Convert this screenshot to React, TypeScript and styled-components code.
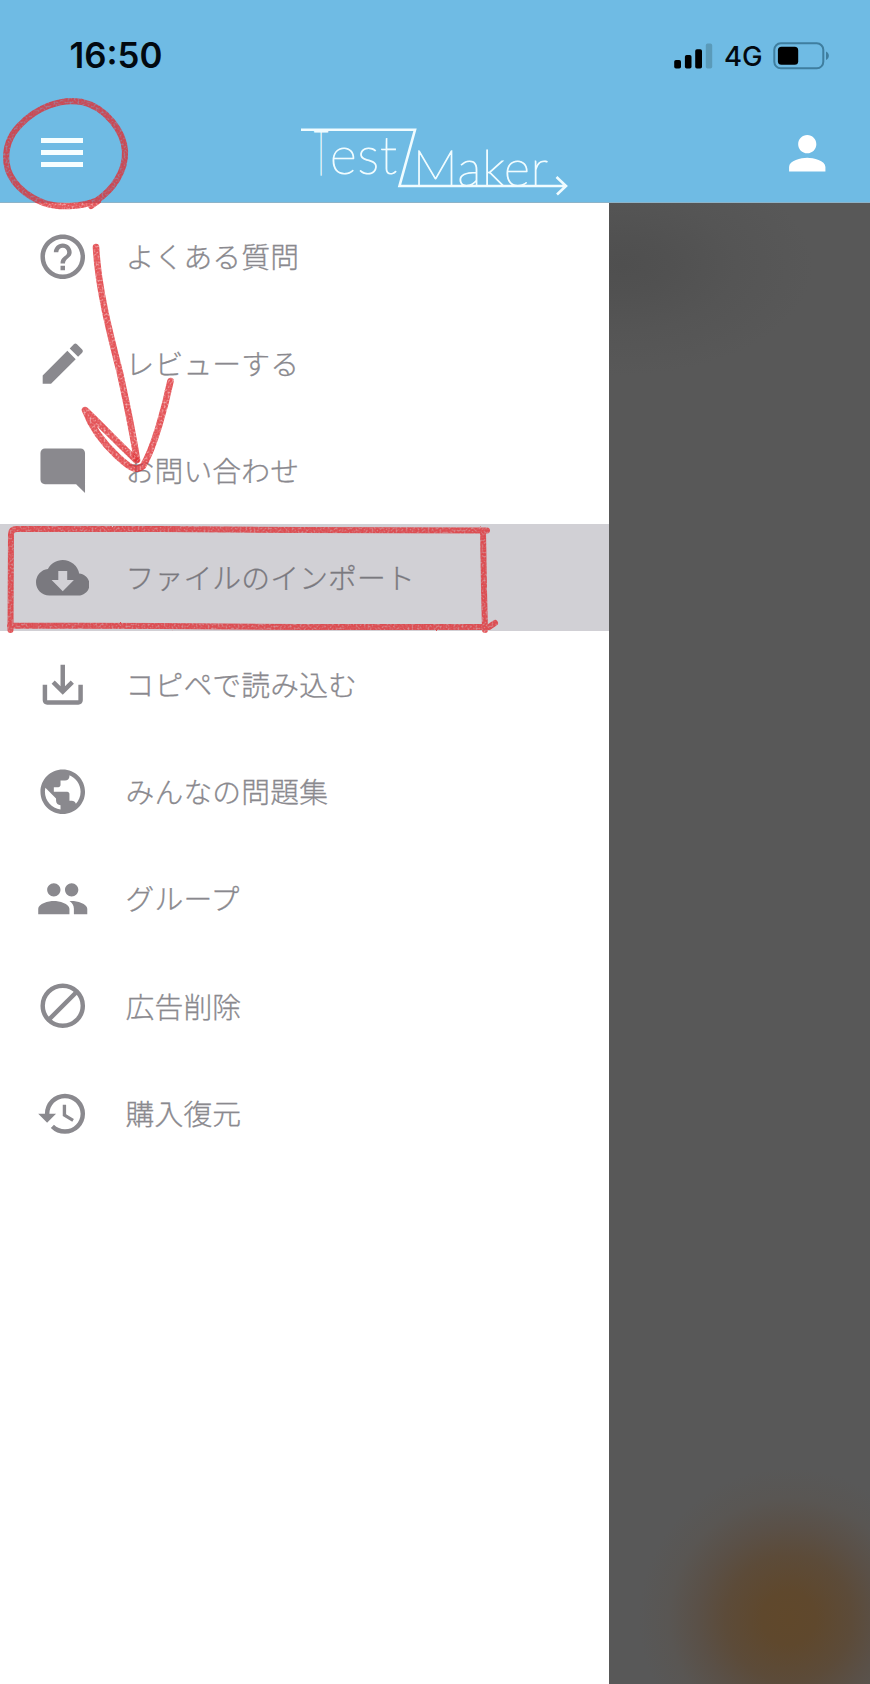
import React from 'react';
import styled, { createGlobalStyle } from 'styled-components';
import {
  MdCloudDownload,
  MdCreate,
  MdGroup,
  MdHelpOutline,
  MdHistory,
  MdModeComment,
  MdPerson,
  MdPublic,
  MdSaveAlt,
} from 'react-icons/md';

const GlobalStyle = createGlobalStyle`
  body { margin: 0; background: #fff; }
  *, *::before, *::after { box-sizing: border-box; }
`;

const Screen = styled.div`
  position: relative;
  display: flex;
  flex-direction: column;
  width: 870px;
  height: 1684px;
  overflow: hidden;
  font-family: 'Noto Sans CJK JP', sans-serif;
`;

const Header = styled.header`
  flex: none;
  height: 203px;
  background: #6fbbe4;
  border-bottom: 1px solid #8db3c8;
`;

const StatusBar = styled.div`
  display: flex;
  align-items: center;
  justify-content: space-between;
  height: 112px;
  padding: 0 41px 0 69.5px;
  font-family: Inter, sans-serif;
  color: #020910;
`;

const Clock = styled.time`
  padding-bottom: 2px;
  font-size: 34.8px;
  font-weight: 600;
  line-height: 42px;
`;

const StatusIcons = styled.div`
  display: flex;
  align-items: center;
`;

const Network = styled.span`
  width: 59px;
  padding-left: 11px;
  font-size: 27.5px;
  font-weight: 450;
  line-height: 34px;
  white-space: nowrap;
`;

const NavBar = styled.nav`
  display: grid;
  grid-template-columns: 290px 290px 290px;
  height: 90px;
`;

const MenuButton = styled.button`
  display: flex;
  flex-direction: column;
  gap: 7.3px;
  width: 42px;
  margin: 26px 0 0 41.4px;
  padding: 0;
  border: 0;
  background: none;
`;

const MenuLine = styled.span`
  height: 4.8px;
  background: #f6feff;
`;

const LogoImage = styled.svg`
  overflow: visible;
`;

const AccountButton = styled.button`
  justify-self: end;
  width: 54.5px;
  height: 54.5px;
  margin: 14px 35.6px 0 0;
  padding: 0;
  border: 0;
  background: none;
  color: #fff;
  font-size: 54.5px;
  line-height: 0;
`;

const Body = styled.main`
  display: flex;
  flex: 1;
`;

const Drawer = styled.ul`
  width: 609px;
  margin: 0;
  padding: 0;
  list-style: none;
  background: #fff;
`;

const Item = styled.li<{ $active?: boolean }>`
  display: flex;
  align-items: center;
  height: 107.1px;
  padding-left: 35.7px;
  background: ${(p) => (p.$active ? '#d1d0d5' : 'transparent')};
  color: ${(p) => (p.$active ? '#7a797f' : '#8a898e')};
`;

const ItemIcon = styled.span`
  display: flex;
  width: 53.5px;
  font-size: 53.5px;
`;

const ItemLabel = styled.span`
  margin-left: 36.3px;
  padding-bottom: 1.4px;
  font-size: 28.8px;
  font-weight: 300;
  line-height: 42px;
  letter-spacing: 0.15px;
  white-space: nowrap;
  -webkit-text-stroke: 0.3px currentColor;
`;

const Backdrop = styled.div`
  flex: 1;
  background:
    radial-gradient(ellipse 190px 110px at 14px 62px, #4f4f4f 0%, #515151 25%, #555 60%, rgba(88, 88, 88, 0) 100%),
    radial-gradient(circle 150px at 180px 1415px, #60482b 0%, #5f482d 18%, #5c4b39 42%, #5a5047 60%, #595653 80%, rgba(88, 88, 88, 0) 100%),
    #585858;
`;

const Markup = styled.svg`
  position: absolute;
  top: 0;
  left: 0;
  pointer-events: none;
`;

const Signal = () => (
  <svg width="39" height="26" viewBox="0 0 39 26">
    <rect x="0.2" y="17" width="6.8" height="8.6" rx="1.8" />
    <rect x="10.9" y="12" width="6.6" height="13.6" rx="1.8" />
    <rect x="21.2" y="6.2" width="6.8" height="19.4" rx="1.8" />
    <rect x="31.8" y="0.6" width="6.4" height="25" rx="1.8" fill="#5a9ab9" />
  </svg>
);

const Battery = () => (
  <svg width="57" height="28" viewBox="0 0 57 28">
    <rect x="2.3" y="1.3" width="49" height="25" rx="6.5" fill="none" stroke="#3f7e9f" strokeWidth="2" />
    <rect x="5.9" y="4.8" width="20.3" height="18" rx="3.6" fill="#000" />
    <path d="M54 9.4c3.8 1.6 3.8 7 0 8.6z" fill="#3f7e9f" />
  </svg>
);

const Logo = () => (
  <LogoImage width="290" height="90" viewBox="290 112 290 90">
    <g fill="#f0fcff" stroke="#f0fcff" strokeWidth="1.1" fontFamily="Lato, sans-serif" fontWeight="200">
      <text x="314" y="174.5" fontSize="62.5" strokeWidth="1.6" textLength="14" lengthAdjust="spacingAndGlyphs">
        T
      </text>
      <text x="330" y="173.5" fontSize="51.5" textLength="67">
        est
      </text>
      <text x="413" y="186" fontSize="50" textLength="135">
        Maker
      </text>
    </g>
    <path
      d="M301 129.8H415L399.5 186H565M556.5 177L566 186L557 194.5"
      fill="none"
      stroke="#f0fcff"
      strokeWidth="2.6"
    />
  </LogoImage>
);

const NoAds = () => (
  <svg width="1em" height="1em" viewBox="0 0 24 24" fill="none" stroke="currentColor" strokeWidth="2">
    <circle cx="12" cy="12" r="9" />
    <path d="M5.6 18.4L18.4 5.6" />
  </svg>
);

const items = [
  { label: 'よくある質問', icon: <MdHelpOutline /> },
  { label: 'レビューする', icon: <MdCreate /> },
  { label: 'お問い合わせ', icon: <MdModeComment /> },
  { label: 'ファイルのインポート', icon: <MdCloudDownload />, active: true },
  { label: 'コピペで読み込む', icon: <MdSaveAlt /> },
  { label: 'みんなの問題集', icon: <MdPublic /> },
  { label: 'グループ', icon: <MdGroup /> },
  { label: '広告削除', icon: <NoAds /> },
  { label: '購入復元', icon: <MdHistory /> },
];

/* Hand-drawn crayon marks over the screen */
const CrayonMarks = () => (
  <Markup width="870" height="700" viewBox="0 0 870 700">
    <defs>
      <filter id="crayon" x="0" y="0" width="870" height="700" filterUnits="userSpaceOnUse" colorInterpolationFilters="sRGB">
        <feTurbulence type="fractalNoise" baseFrequency="0.5" numOctaves="2" seed="4" result="grain" />
        <feDisplacementMap in="SourceGraphic" in2="grain" scale="1.6" xChannelSelector="R" yChannelSelector="G" result="rough" />
        <feColorMatrix in="grain" type="matrix" values="0 0 0 0 0  0 0 0 0 0  0 0 0 0 0  1.3 0 0 0 0.27" result="mask" />
        <feComposite in="rough" in2="mask" operator="in" />
        <feGaussianBlur stdDeviation="0.7" />
      </filter>
    </defs>
    <g filter="url(#crayon)" fill="none" stroke="#de2f35" strokeOpacity="0.82" strokeLinecap="round" strokeLinejoin="round">
      <path strokeWidth="6.2" d="M82 102C60 98 36 108 20 125C9 136 5 149 6.5 163C9 182 26 196 44 203C59 208 79 207 96 201C113 190 126 171 125 151C124 132 106 107 82 102M91 206L98 201" />
      <path strokeWidth="6.6" d="M96 247C98 287 109 330 120 373C127 405 133 434 137 460" />
      <path strokeWidth="6.6" d="M170.5 381C165 407 154 448 143 466C135 473 127 465 117 456C101 441 91 426 85 410C99 423 120 445 136 460" />
      <path strokeWidth="6" d="M10.5 630L11 534Q11 529 17 529L160 529L300 530L487 530.5M483 531L484 590L485 630M10 625.5L160 626L300 627L489 627L495 623" />
    </g>
  </Markup>
);

export default function App() {
  return (
    <Screen>
      <GlobalStyle />
      <Header>
        <StatusBar>
          <Clock>16:50</Clock>
          <StatusIcons>
            <Signal />
            <Network>4G</Network>
            <Battery />
          </StatusIcons>
        </StatusBar>
        <NavBar>
          <MenuButton aria-label="メニュー">
            <MenuLine />
            <MenuLine />
            <MenuLine />
          </MenuButton>
          <Logo />
          <AccountButton aria-label="アカウント">
            <MdPerson />
          </AccountButton>
        </NavBar>
      </Header>
      <Body>
        <Drawer>
          {items.map(({ label, icon, active }) => (
            <Item key={label} $active={active}>
              <ItemIcon>{icon}</ItemIcon>
              <ItemLabel>{label}</ItemLabel>
            </Item>
          ))}
        </Drawer>
        <Backdrop />
      </Body>
      <CrayonMarks />
    </Screen>
  );
}
